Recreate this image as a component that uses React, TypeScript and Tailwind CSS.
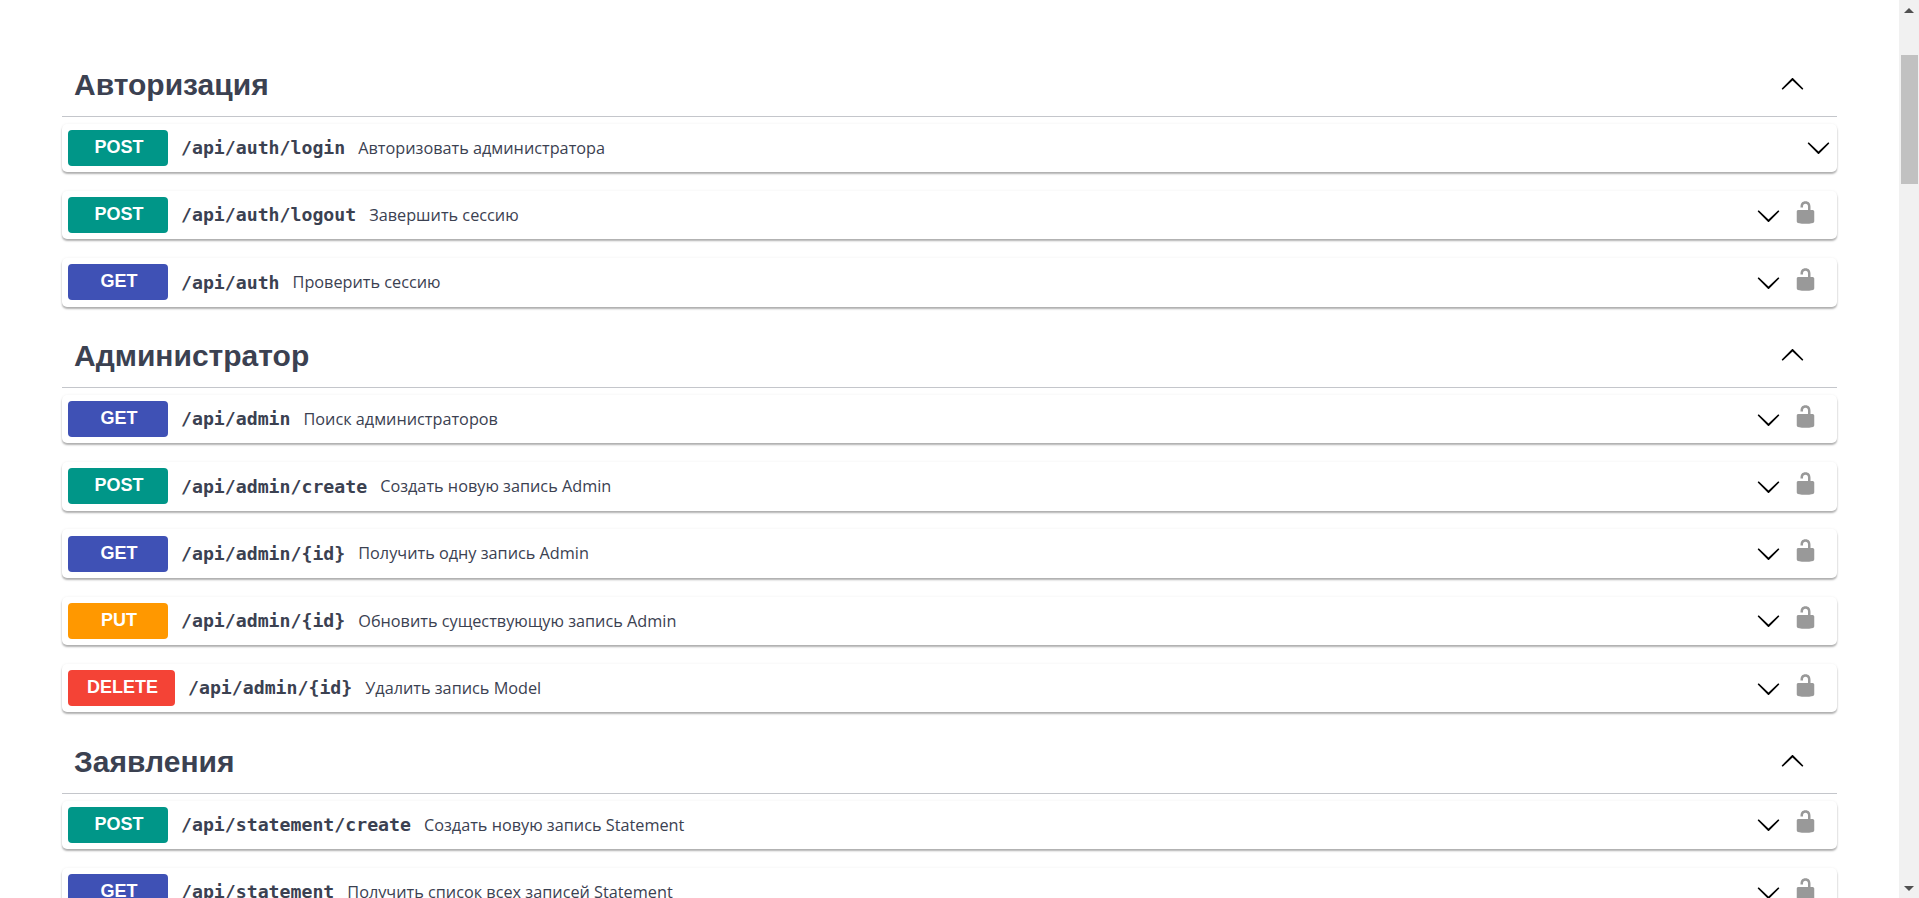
import { ReactNode } from 'react'

const methodColors: Record<string, string> = {
  POST: 'bg-[#009688]',
  GET: 'bg-[#3f51b5]',
  PUT: 'bg-[#ff9800]',
  DELETE: 'bg-[#f44336]'
}

type Op = { method: string; path: string; desc: string; open?: boolean }

const sections: { title: string; ops: Op[]; cls: string }[] = [
  {
    title: 'Авторизация',
    cls: 'mb-[7.3px]',
    ops: [
      { method: 'POST', path: '/api/auth/login', desc: 'Авторизовать администратора', open: true },
      { method: 'POST', path: '/api/auth/logout', desc: 'Завершить сессию' },
      { method: 'GET', path: '/api/auth', desc: 'Проверить сессию' }
    ]
  },
  {
    title: 'Администратор',
    cls: 'mb-[7.3px]',
    ops: [
      { method: 'GET', path: '/api/admin', desc: 'Поиск администраторов' },
      { method: 'POST', path: '/api/admin/create', desc: 'Создать новую запись Admin' },
      { method: 'GET', path: '/api/admin/{id}', desc: 'Получить одну запись Admin' },
      { method: 'PUT', path: '/api/admin/{id}', desc: 'Обновить существующую запись Admin' },
      { method: 'DELETE', path: '/api/admin/{id}', desc: 'Удалить запись Model' }
    ]
  },
  {
    title: 'Заявления',
    cls: '',
    ops: [
      { method: 'POST', path: '/api/statement/create', desc: 'Создать новую запись Statement' },
      { method: 'GET', path: '/api/statement', desc: 'Получить список всех записей Statement' }
    ]
  }
]

function Arrow({ up }: { up?: boolean }) {
  return (
    <svg viewBox="0 0 20 20" className={up ? 'h-[25px] w-[25px] rotate-180' : 'h-[25px] w-[25px]'}>
      <path d="M17.418 6.109c.272-.268.709-.268.979 0s.271.701 0 .969l-7.908 7.83c-.27.268-.707.268-.979 0l-7.908-7.83c-.27-.268-.27-.701 0-.969.271-.268.709-.268.979 0L10 13.25l7.418-7.141z" />
    </svg>
  )
}

function Lock() {
  return (
    <svg viewBox="0 0 20 20" className="h-[25px] w-[25px] fill-[#999999]">
      <path d="M15.8 8H14V5.6C14 2.703 12.665 1 10 1 7.334 1 6 2.703 6 5.6V6h2v-.801C8 3.754 8.797 3 10 3c1.203 0 2 .754 2 2.199V8H4c-.553 0-1 .646-1 1.199V17c0 .549.428 1.139.951 1.307l1.197.387C5.672 18.861 6.55 19 7.1 19h5.8c.549 0 1.428-.139 1.951-.307l1.196-.387c.524-.167.953-.757.953-1.306V9.199C17 8.646 16.352 8 15.8 8z" />
    </svg>
  )
}

function Row({ op }: { op: Op }) {
  return (
    <div className="mb-[18.75px] flex h-[48.5px] items-center rounded-[5px] bg-white pl-[6px] pr-[6px] shadow-[0_2px_2px_rgba(0,0,0,0.3),0_0_3px_rgba(0,0,0,0.06)]">
      <span
        className={`${methodColors[op.method]} flex h-[36px] min-w-[100px] items-center justify-center rounded-[4px] pb-[1px] pl-[19px] pr-[17px] font-['Liberation_Sans',sans-serif] text-[18px] font-bold text-white`}
      >
        {op.method}
      </span>
      <span className="ml-[13px] font-['DejaVu_Sans_Mono',monospace] text-[18.2px] font-bold text-[#3b4151]">
        {op.path}
      </span>
      <span className="ml-[13px] flex-1 font-['Open_Sans',sans-serif] text-[16.25px] text-[#3b4151]">
        {op.desc}
      </span>
      <span className="flex items-center">
        <Arrow />
      </span>
      {!op.open && (
        <span className="mb-[6px] ml-[12px] mr-[13px] flex items-center">
          <Lock />
        </span>
      )}
    </div>
  )
}

function Section({ title, ops, cls }: { title: string; ops: Op[]; cls: string }): ReactNode {
  return (
    <div className={cls}>
      <div className="mb-[6.5px] flex h-[63px] items-center justify-between border-b border-[#c4c6cb] pb-[2px] pl-[12px] pr-[32.5px]">
        <h3 className="font-['Liberation_Sans',sans-serif] text-[30px] font-bold text-[#3b4151]">{title}</h3>
        <Arrow up />
      </div>
      {ops.map((op, i) => (
        <Row key={i} op={op} />
      ))}
    </div>
  )
}

export default function App() {
  return (
    <div className="flex h-screen overflow-hidden bg-white">
      <div className="flex-1 overflow-hidden pl-[62px] pr-[62px] pt-[54px]">
        {sections.map((s) => (
          <Section key={s.title} {...s} />
        ))}
      </div>
      <div className="flex w-[20px] shrink-0 flex-col bg-[#f1f1f1]">
        <div className="flex h-[20px] items-center justify-center">
          <div className="h-0 w-0 border-x-[5px] border-b-[5px] border-x-transparent border-b-[#505050]" />
        </div>
        <div className="ml-[2px] mt-[35px] h-[129px] w-[17px] bg-[#c1c1c1]" />
        <div className="mt-auto flex h-[20px] items-center justify-center">
          <div className="h-0 w-0 border-x-[5px] border-t-[5px] border-x-transparent border-t-[#505050]" />
        </div>
      </div>
    </div>
  )
}
